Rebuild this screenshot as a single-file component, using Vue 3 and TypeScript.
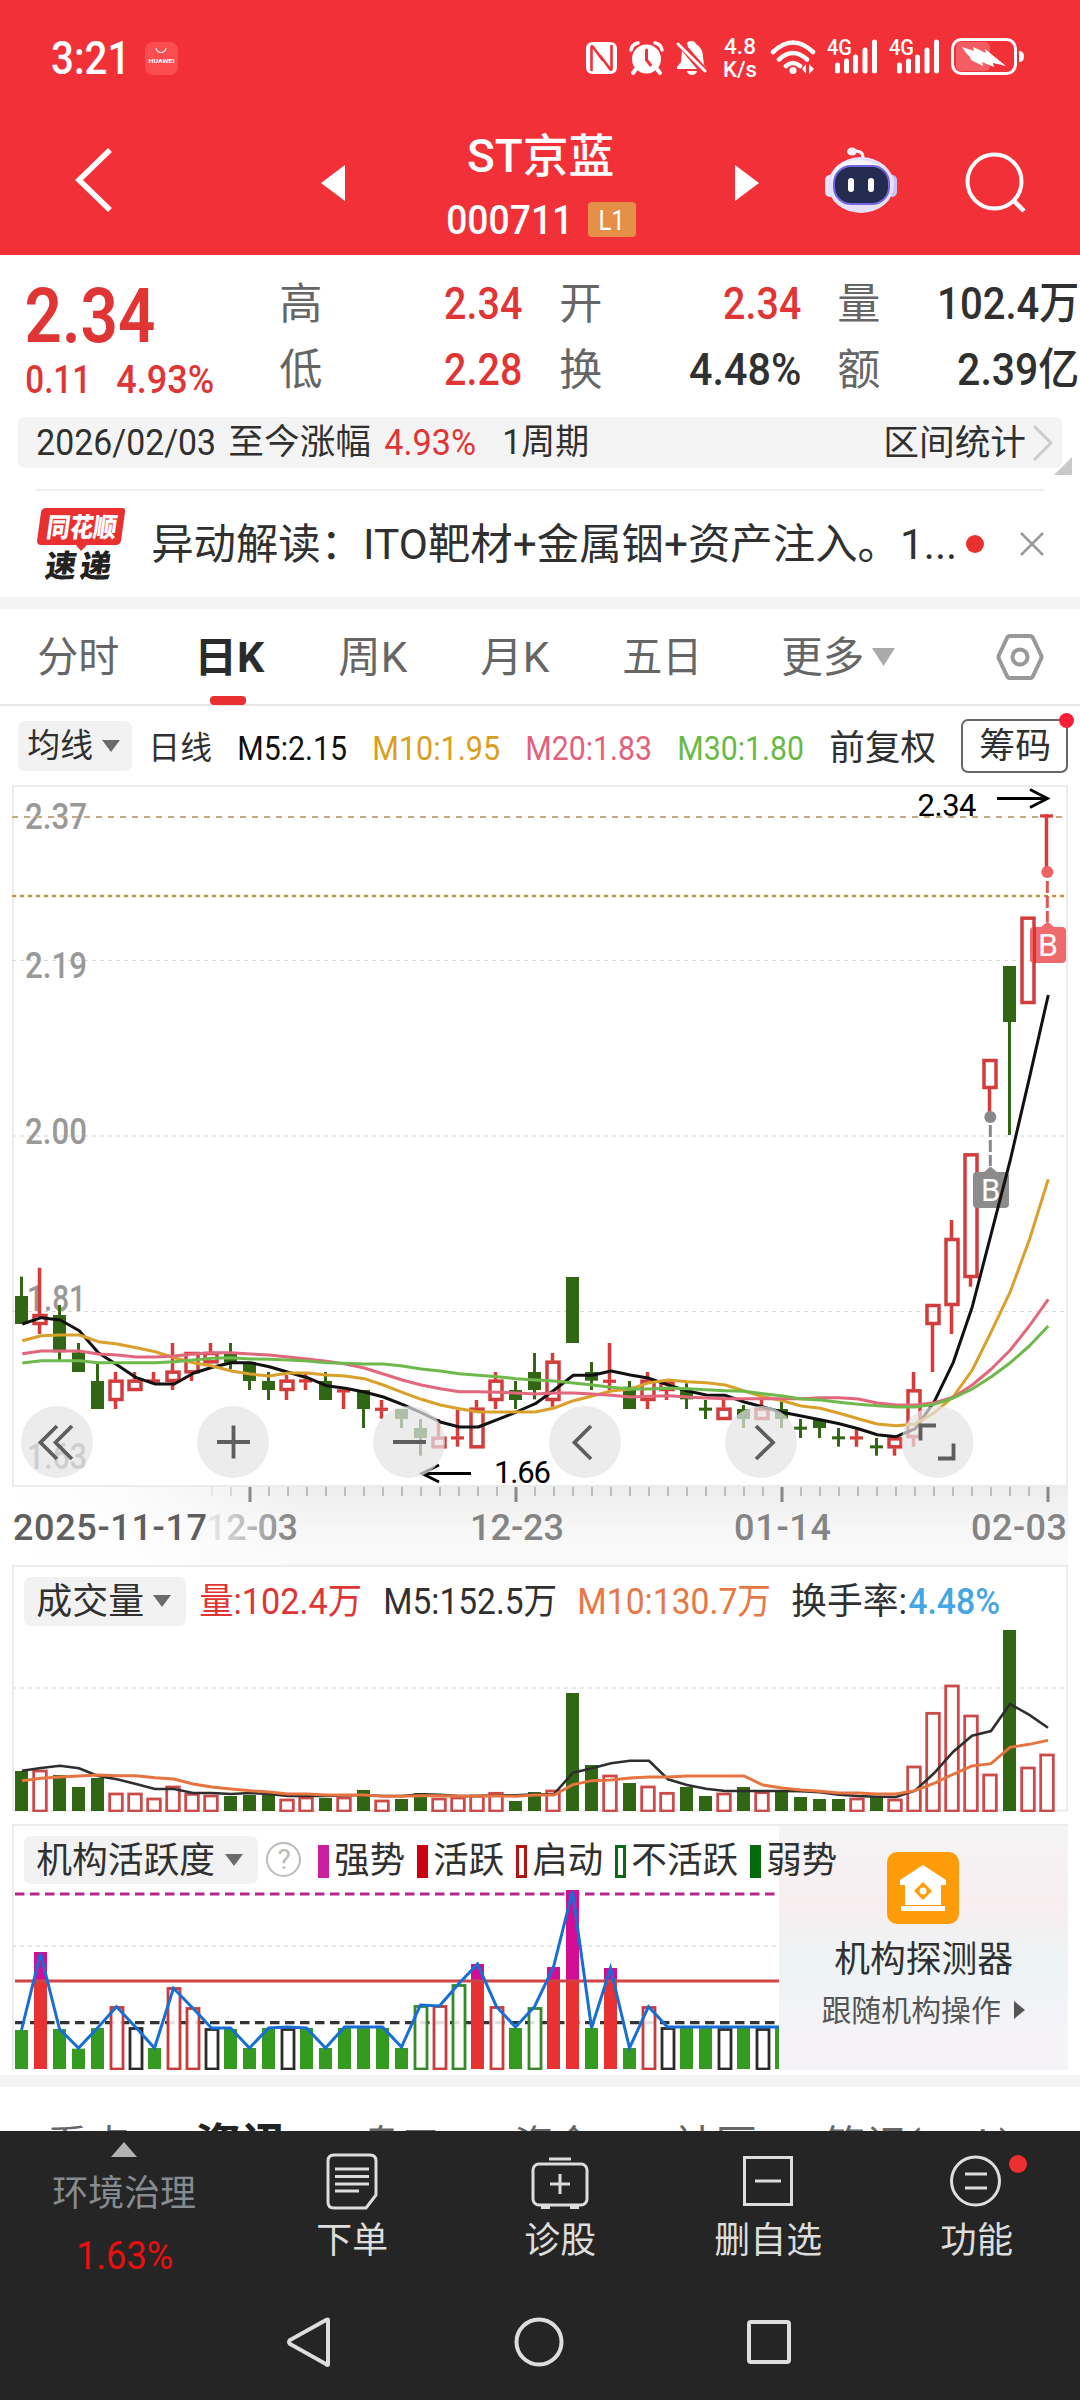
<script setup lang="ts">
import { h, type FunctionalComponent } from 'vue'

interface FitProps { t: string; w: number; s: number; b?: number }

// Single line of text whose glyphs are fitted to the width w at font size s.
const Fit: FunctionalComponent<FitProps> = (p) =>
  h('svg', { width: p.w, height: p.s, style: 'display:block;overflow:visible;flex:none' }, [
    h('text', {
      x: -p.s * 0.02, y: p.s * 0.855, textLength: p.w + p.s * 0.05, lengthAdjust: 'spacingAndGlyphs',
      'font-size': p.s, 'font-weight': p.b ?? 400, fill: 'currentColor',
    }, p.t),
  ])
Fit.props = ['t', 'w', 's', 'b']

const STEP = 19
const cx = (i: number) => 21.5 + STEP * i
const line = (vs: number[], base: number) => vs.map((v, i) => `${cx(i)},${(base + v / 3).toFixed(1)}`).join(' ')

// [up?, high, body top, body bottom, low]
type Candle = [0 | 1, number, number, number, number]
const candles: Candle[] = [
  [0, 350, 408, 492, 492], [1, 323, 462, 495, 522], [0, 435, 465, 577, 600], [0, 549, 577, 636, 636],
  [0, 610, 663, 747, 747], [1, 636, 659, 723, 747], [1, 636, 659, 693, 693], [1, 636, 658, 669, 672],
  [1, 549, 632, 666, 690], [1, 576, 576, 640, 663], [1, 549, 576, 610, 610], [0, 549, 580, 608, 628],
  [0, 606, 606, 663, 690], [0, 636, 663, 690, 720], [1, 645, 659, 693, 720], [1, 640, 658, 667, 690],
  [0, 636, 663, 720, 720], [1, 688, 688, 697, 747], [0, 690, 690, 747, 804], [1, 720, 743, 752, 776],
  [0, 747, 747, 777, 804], [0, 777, 804, 834, 887], [1, 777, 830, 865, 865], [1, 750, 829, 838, 860],
  [1, 720, 743, 865, 865], [1, 636, 659, 723, 747], [0, 663, 690, 720, 747], [0, 579, 636, 690, 718],
  [1, 579, 602, 723, 740], [0, 351, 351, 549, 549], [0, 606, 636, 662, 690], [1, 549, 659, 668, 690],
  [0, 663, 680, 747, 747], [1, 636, 659, 723, 747], [1, 660, 664, 693, 720], [0, 670, 690, 718, 747],
  [0, 720, 743, 752, 777], [1, 720, 743, 780, 780], [0, 735, 747, 777, 804], [1, 720, 743, 780, 780],
  [0, 725, 747, 777, 804], [0, 777, 800, 809, 834], [0, 777, 780, 804, 834], [0, 804, 829, 838, 860],
  [1, 808, 829, 838, 860], [0, 834, 856, 865, 887], [1, 832, 832, 865, 887], [1, 636, 688, 834, 860],
  [1, 432, 432, 495, 636], [1, 180, 234, 438, 522], [1, -20, -20, 354, 380], [1, -303, -303, -213, -130],
  [0, -582, -582, -414, -75], [1, -730, -730, -468, -468], [1, -1037, -1037, -1028, -865],
]
const sticks = candles.map(([up, hi, top, bot, lo], i) => ({
  up: up === 1, x: cx(i), hi: 1160 + hi / 3, top: 1160 + top / 3, bot: 1160 + bot / 3, lo: 1160 + lo / 3,
  flat: bot - top < 12,
}))

const ma5 = [492, 473, 480, 512, 578, 615, 653, 672, 672, 640, 622, 608, 608, 620, 637, 653, 677, 685, 696, 711, 733, 758, 786, 801, 801, 779, 756, 731, 690, 646, 646, 633, 645, 655, 675, 693, 705, 706, 726, 741, 757, 768, 779, 791, 806, 824, 830, 806, 725, 607, 440, 220, 0, -245, -495]
const ma10 = [542, 527, 525, 525, 545, 552, 563, 575, 593, 608, 618, 633, 642, 648, 639, 639, 645, 648, 656, 675, 697, 718, 735, 746, 756, 756, 756, 756, 744, 722, 708, 693, 687, 668, 660, 665, 668, 675, 693, 710, 722, 738, 745, 760, 776, 792, 797, 792, 758, 710, 630, 515, 395, 240, 58]
const ma20 = [581, 573, 573, 573, 582, 585, 591, 591, 588, 582, 578, 578, 582, 585, 591, 597, 604, 612, 624, 642, 660, 675, 686, 695, 695, 697, 699, 702, 699, 699, 702, 706, 711, 709, 707, 711, 714, 716, 716, 716, 716, 716, 713, 713, 717, 729, 735, 735, 728, 712, 675, 627, 570, 498, 418]
const ma30 = [609, 602, 602, 602, 608, 608, 608, 608, 605, 600, 595, 593, 597, 598, 600, 603, 608, 610, 612, 612, 618, 627, 633, 641, 646, 650, 656, 660, 663, 669, 675, 682, 687, 687, 684, 686, 689, 692, 694, 701, 708, 717, 720, 727, 733, 737, 741, 741, 733, 714, 687, 650, 608, 558, 498]
const maLines = [
  { p: line(ma5, 1160), c: '#111' }, { p: line(ma10, 1160), c: '#d9a02b' },
  { p: line(ma20, 1160), c: '#e2667c' }, { p: line(ma30, 1160), c: '#6fb94c' },
]

const volTops = [633, 630, 645, 681, 654, 699, 699, 714, 678, 700, 705, 708, 705, 705, 717, 711, 714, 711, 690, 720, 717, 699, 714, 711, 705, 697, 723, 696, 690, 399, 615, 645, 669, 678, 697, 681, 708, 699, 681, 695, 693, 711, 717, 717, 714, 710, 717, 618, 457, 375, 465, 642, 210, 621, 582]
const volDown = new Set([0, 2, 3, 4, 11, 12, 13, 16, 18, 20, 21, 26, 27, 29, 30, 32, 35, 36, 38, 40, 41, 42, 43, 45, 52])
const vols = volTops.map((v, i) => ({ x: cx(i), y: 1560 + v / 3, up: !volDown.has(i) }))
const vm5 = line([632, 624, 617, 625, 648, 658, 672, 687, 687, 699, 699, 702, 699, 702, 708, 708, 708, 706, 706, 708, 708, 703, 704, 708, 708, 706, 706, 703, 702, 638, 625, 610, 602, 602, 658, 675, 686, 693, 693, 693, 693, 694, 697, 704, 708, 710, 711, 692, 640, 576, 527, 513, 432, 464, 503], 1560)
const vm10 = line([662, 655, 651, 648, 645, 647, 647, 653, 657, 672, 681, 687, 692, 696, 702, 702, 705, 705, 705, 709, 709, 707, 707, 709, 709, 707, 709, 705, 705, 674, 662, 660, 654, 651, 651, 648, 648, 648, 648, 675, 684, 690, 694, 699, 699, 702, 702, 692, 670, 643, 618, 611, 562, 553, 541], 1560)

// G weak, M strong, r starting, k neutral, g inactive
const actKinds = 'GMGGGrkGrrkGGGkGGGGGGgrgMrGgMMGMGrkGGkGkG'.split('')
const actTops = [660, 426, 657, 716, 654, 588, 651, 714, 531, 591, 654, 657, 714, 654, 654, 654, 714, 654, 654, 654, 714, 585, 585, 522, 462, 588, 654, 591, 471, 240, 654, 474, 714, 588, 651, 654, 654, 654, 654, 654, 654]
const acts = actKinds.map((k, i) => ({ k, x: cx(i), y: 1810 + actTops[i] / 3 }))
const outline: Record<string, string> = { r: '#c93c3c', k: '#2c2c2c', g: '#37892a' }
const actLine = line([660, 430, 657, 714, 654, 590, 651, 714, 535, 593, 654, 654, 714, 654, 651, 654, 714, 651, 651, 651, 711, 585, 588, 522, 462, 590, 651, 590, 471, 243, 654, 474, 714, 590, 651, 651, 651, 651, 651, 651, 651], 1810)

const ticks = Array.from({ length: 45 }, (_, k) => k + 10).map((i) => ({
  x: cx(i) + 0.5, major: [12, 26, 40, 54].includes(i), o: i === 10 ? 0.25 : i === 11 ? 0.5 : 1,
}))
const yLabels = [
  { t: '2.37', x: 26, y: 829, w: 60 }, { t: '2.19', x: 26, y: 978, w: 60 }, { t: '2.00', x: 26, y: 1144, w: 60 },
  { t: '1.81', x: 28, y: 1311, w: 57 }, { t: '1.63', x: 28, y: 1469, w: 58 },
]
const dates = [
  { t: '12-23', x: 470, w: 94 }, { t: '01-14', x: 734, w: 97 }, { t: '02-03', x: 971, w: 96 },
]
const circles = [57, 233, 409, 585, 761, 937.5]

const quotes = [
  [{ k: '高', v: '2.34', w: 76, red: true }, { k: '开', v: '2.34', w: 76, red: true }, { k: '量', v: '102.4万', w: 140, red: false }],
  [{ k: '低', v: '2.28', w: 76, red: true }, { k: '换', v: '4.48%', w: 110, red: false }, { k: '额', v: '2.39亿', w: 120, red: false }],
]
</script>

<template>
  <div class="screen">
    <header class="head">
      <div class="status">
        <Fit t="3:21" :w="77" :s="46" :b="500" />
        <svg class="huawei" width="33" height="33" viewBox="0 0 33 33">
          <rect width="33" height="33" rx="8" fill="#fb4c50" />
          <path d="M11 6c1 6 9 6 10 0" fill="none" stroke="#fff" stroke-width="1.2" />
          <text x="3.5" y="21" font-size="6" font-weight="700" fill="#fff" textLength="26" lengthAdjust="spacingAndGlyphs">HUAWEI</text>
        </svg>
        <svg class="sys" width="440" height="44" viewBox="586 36 440 44" fill="#fff">
          <path d="M593 42h17q7 0 7 7v18q0 7-7 7h-17q-7 0-7-7V49q0-7 7-7z" />
          <path d="M593 70V46.500L610 69M610 46v23.500L593.500 47.500" fill="none" stroke="#f13038" stroke-width="0" />
          <path d="M591.500 71V47q0-1.500 1.500 0L603 60.500M611.500 45v24q0 1.500-1.500 0L600 55.500" fill="none" stroke="#f13038" stroke-width="2.600" />
          <circle cx="646.500" cy="59" r="14.500" />
          <path d="M631 50q1-6 7-7M662 50q-1-6-7-7" fill="none" stroke="#fff" stroke-width="3.500" stroke-linecap="round" />
          <path d="M636 69l-3 4M657 69l3 4" stroke="#fff" stroke-width="4" stroke-linecap="round" />
          <path d="M646.500 50v10l4 5" fill="none" stroke="#f13038" stroke-width="3" stroke-linecap="round" />
          <path d="M687 43q1-2 4-2 4 0 5 3 7 4 7 13l1 8 3 4-19-22zM682 51l15 18h-20v-2l4-5zM687 71h10q-1 4-5 4t-5-4z" />
          <path d="M678 44l27 27" stroke="#fff" stroke-width="3" stroke-linecap="round" />
          <text x="724" y="54" font-size="22.500" font-weight="500" textLength="32">4.8</text>
          <text x="723" y="76.500" font-size="22" font-weight="500" textLength="34" lengthAdjust="spacingAndGlyphs">K/s</text>
          <path d="M773 52q20-19 40 0M779 59.500q14-13 28 0M786 66q7-6 14 0" fill="none" stroke="#fff" stroke-width="4.500" stroke-linecap="round" />
          <circle cx="793" cy="70.500" r="3.500" />
          <path d="M806 64v10l-4-5zM809 64v10l5-5z" />
          <g v-for="dx in [0, 62]" :key="dx" :transform="`translate(${dx} 0)`">
            <text x="827" y="55" font-size="22" font-weight="500" textLength="25" lengthAdjust="spacingAndGlyphs">4G</text>
            <path d="M837.500 65v6M846.500 61v10M855.500 57v14M865 50v21M874.500 42v29" stroke="#fff" stroke-width="5" stroke-linecap="round" />
          </g>
          <rect x="952.500" y="39.500" width="63" height="34" rx="9" fill="none" stroke="#fff" stroke-width="3" />
          <rect x="956" y="42" width="34" height="29" rx="5" opacity=".22" />
          <path d="M1019 51q5 0 5 5.500t-5 5.500z" />
          <path d="M962 47l12 4-1-4 13 6-1-4 21 17-13-3 1 4-12-5 1 4-12-6-1-3-4-4z" />
        </svg>
      </div>
      <div class="title">
        <svg class="back" width="40" height="68" viewBox="0 0 40 68"><path d="M36 4L5 34l31 30" fill="none" stroke="#fff" stroke-width="5.500" /></svg>
        <svg class="prev" width="24" height="36"><path d="M0 18L24 0v36z" fill="#fff" /></svg>
        <div class="name">
          <Fit t="ST京蓝" :w="145" :s="46" :b="500" />
          <div class="code"><Fit t="000711" :w="125" :s="41" :b="500" /><span class="lv"><Fit t="L1" :w="25" :s="28" /></span></div>
        </div>
        <svg class="next" width="24" height="36"><path d="M24 18L0 0v36z" fill="#fff" /></svg>
        <svg class="bot" width="74" height="70" viewBox="824 145 74 70">
          <path d="M863 158q0-8-9-7" fill="none" stroke="#fff" stroke-width="3" />
          <ellipse cx="852" cy="151.500" rx="5" ry="4" fill="#f2eefc" />
          <rect x="825" y="175" width="10" height="22" rx="5" fill="#e9e4fb" />
          <rect x="887" y="175" width="10" height="22" rx="5" fill="#c9c2f5" />
          <ellipse cx="861" cy="185" rx="33" ry="28" fill="#e6e1fa" />
          <ellipse cx="858" cy="176" rx="26" ry="16" fill="#f8f5ff" />
          <rect x="834" y="166" width="55" height="38" rx="17" fill="#232c4e" stroke="#7466e0" stroke-width="2" />
          <rect x="848" y="178" width="6" height="14" rx="3" fill="#fff" /><rect x="868" y="178" width="6" height="14" rx="3" fill="#fff" />
        </svg>
        <svg class="search" width="62" height="64" viewBox="964 150 62 64"><circle cx="994.500" cy="181.500" r="27" fill="none" stroke="#fff" stroke-width="4" /><path d="M1013 200l11 11" stroke="#fff" stroke-width="4.500" /></svg>
      </div>
    </header>

    <section class="quote">
      <div class="price red">
        <Fit t="2.34" :w="127" :s="76" :b="600" />
        <div class="chg"><Fit t="0.11" :w="64" :s="39" :b="500" /><Fit t="4.93%" :w="96" :s="39" :b="500" /></div>
      </div>
      <div class="grid">
        <div v-for="(row, r) in quotes" :key="r" class="qrow">
          <div v-for="q in row" :key="q.k" class="cell">
            <Fit class="grey" :t="q.k" :w="41" :s="43" /><Fit :class="{ red: q.red }" :t="q.v" :w="q.w" :s="44" :b="500" />
          </div>
        </div>
      </div>
    </section>

    <section class="range">
      <Fit t="2026/02/03" :w="178" :s="36" />
      <Fit class="r1" t="至今涨幅" :w="141" :s="35" />
      <Fit class="r2 red" t="4.93%" :w="90" :s="36" />
      <Fit class="r3" t="1周期" :w="85" :s="35" />
      <Fit class="r4" t="区间统计" :w="141" :s="35" />
      <svg class="r5" width="20" height="36"><path d="M1 1l17 17L1 35" fill="none" stroke="#ccc" stroke-width="3" /></svg>
      <svg class="corner" width="18" height="18"><path d="M18 0v18H0z" fill="#c9c9c9" /></svg>
    </section>

    <section class="news">
      <svg class="logo" width="90" height="74" viewBox="36 506 90 74">
        <path d="M46 507h76q4 0 3 4l-4 29q-1 4-5 4H87l-6 6-5-6H41q-4 0-4-4l4-29q1-4 5-4z" fill="#e93030" />
        <text x="46" y="536.500" font-size="27" font-weight="900" fill="#fff" textLength="70" lengthAdjust="spacingAndGlyphs" transform="skewX(-8) translate(75 0)">同花顺</text>
        <text x="45" y="576" font-size="31" font-weight="900" fill="#222" textLength="66" transform="skewX(-8) translate(80 0)">速递</text>
      </svg>
      <Fit class="n1" t="异动解读：ITO靶材+金属铟+资产注入。1..." :w="804" :s="42" />
      <i class="ndot"></i>
      <svg class="nx" width="24" height="24"><path d="M1 1l22 22M23 1L1 23" stroke="#999" stroke-width="2.500" /></svg>
    </section>
    <div class="band"></div>

    <nav class="tabs">
      <Fit t="分时" :w="80" :s="42" />
      <div class="active"><Fit t="日K" :w="68" :s="42" :b="700" /><i></i></div>
      <Fit class="t2" t="周K" :w="67" :s="42" />
      <Fit class="t3" t="月K" :w="67" :s="42" />
      <Fit class="t3" t="五日" :w="78" :s="42" />
      <Fit class="t5" t="更多" :w="81" :s="42" />
      <svg class="t6" width="23" height="18"><path d="M0 0h23L11.500 18z" fill="#aaa" /></svg>
      <svg class="t7" width="48" height="46" viewBox="0 0 48 46"><path d="M14 2h20q2 0 3 2l8 17q1 2 0 4l-8 17q-1 2-3 2H14q-2 0-3-2L3 25q-1-2 0-4l8-17q1-2 3-2z" fill="none" stroke="#999" stroke-width="4" /><circle cx="24" cy="23" r="7.500" fill="none" stroke="#999" stroke-width="4" /></svg>
    </nav>

    <section class="ma">
      <span class="chip c1"><Fit t="均线" :w="64" :s="33" /><svg width="18" height="12"><path d="M0 0h18L9 12z" fill="#6b6b6b" /></svg></span>
      <Fit class="m1" t="日线" :w="62" :s="32" />
      <Fit class="m2 black" t="M5:2.15" :w="108" :s="34" />
      <Fit class="m3 yellow" t="M10:1.95" :w="126" :s="34" />
      <Fit class="m4 pink" t="M20:1.83" :w="125" :s="34" />
      <Fit class="m4 green" t="M30:1.80" :w="125" :s="34" />
      <Fit class="m5" t="前复权" :w="105" :s="35" />
      <span class="chipbtn"><Fit t="筹码" :w="70" :s="35" /><i></i></span>
    </section>

    <svg class="kline" width="1080" height="780" viewBox="0 785 1080 780">
      <defs>
        <linearGradient id="axis" x1="0" y1="0" x2="0" y2="1"><stop offset="0" stop-color="#ededed" /><stop offset=".6" stop-color="#f8f8f8" /><stop offset="1" stop-color="#fafafa" /></linearGradient>
        <linearGradient id="fade" x1="0" y1="0" x2="1" y2="0"><stop offset="0" stop-color="#fff" /><stop offset=".35" stop-color="#fff" stop-opacity=".85" /><stop offset="1" stop-color="#fff" stop-opacity="0" /></linearGradient>
        <linearGradient id="datefade" x1="0" y1="0" x2="1" y2="0"><stop offset="0" stop-color="#888" stop-opacity=".1" /><stop offset=".9" stop-color="#888" /></linearGradient>
      </defs>
      <rect x="12" y="1486" width="1056" height="79" fill="url(#axis)" />
      <rect x="12" y="1487" width="300" height="78" fill="url(#fade)" />
      <rect x="13" y="786" width="1054" height="700" fill="#fff" stroke="#ececec" stroke-width="2" />
      <g fill="none">
        <path d="M12 960.500H1066M12 1311.500H1066" stroke="#d8d8d8" stroke-dasharray="4 4" />
        <path d="M12 1136H1066" stroke="#e9e9e9" stroke-width="2" stroke-dasharray="4 4" />
      </g>
      <g fill="#999" font-size="36" font-weight="500">
        <text v-for="l in yLabels" :key="l.t" :x="l.x - 1" :y="l.y" :textLength="l.w + 2" lengthAdjust="spacingAndGlyphs">{{ l.t }}</text>
      </g>
      <path d="M12 817H1066" stroke="#c4aa80" stroke-width="2" stroke-dasharray="6 6" />
      <path d="M12 896H1066" stroke="#fbe3bb" stroke-width="3.500" stroke-dasharray="4.500 3.500" />
      <path d="M12 896H1066" stroke="#bd8f50" stroke-width="2" stroke-dasharray="4 4" />
      <g v-for="s in sticks" :key="s.x">
        <template v-if="s.up">
          <path :d="`M${s.x - 1} ${s.hi}V${s.top}M${s.x - 1} ${s.bot}V${s.lo}`" stroke="#d83a3a" stroke-width="3.500" />
          <rect v-if="s.flat" :x="s.x - 7.500" :y="s.top" width="13" height="3.200" fill="#d83a3a" />
          <path v-if="s.flat" :d="`M${s.x - 1} ${s.top}V${s.bot}`" stroke="#d83a3a" stroke-width="3.500" />
          <rect v-else :x="s.x - 6.500" :y="s.top + 1.500" width="12" :height="s.bot - s.top - 3" fill="none" stroke="#d23c3c" stroke-width="3.500" />
        </template>
        <template v-else>
          <path :d="`M${s.x} ${s.hi}V${s.lo}`" stroke="#306614" stroke-width="3" />
          <rect :x="s.x - 6.500" :y="s.top" width="13" :height="s.bot - s.top" fill="#306614" />
        </template>
      </g>
      <circle cx="990.300" cy="1117" r="6" fill="#888" />
      <path d="M990.300 1125V1166" stroke="#888" stroke-width="3" stroke-dasharray="12 3" />
      <path d="M976 1172h8l6.500-5.500 6.500 5.500h8q4 0 4 4v28q0 4-4 4h-28.500q-3.500 0-3.500-4v-28q0-4 3.500-4z" fill="#8c8c8c" />
      <text x="981" y="1201" font-size="31" fill="#fff">B</text>
      <circle cx="1047.300" cy="872" r="6" fill="#ee6165" />
      <path d="M1047.300 881V922" stroke="#e15454" stroke-width="3" stroke-dasharray="12 3" />
      <path d="M1033 927h8l6.500-5.500 6.500 5.500h8q4 0 4 4v28q0 4-4 4h-28.500q-3.500 0-3.500-4v-28q0-4 3.500-4z" fill="#ee5f62" fill-opacity=".93" />
      <path d="M1034.500 927V963" stroke="#dc2f34" stroke-width="3" />
      <text x="1038" y="956" font-size="32" fill="#fff">B</text>
      <polyline v-for="m in maLines" :key="m.c" :points="m.p" transform="translate(.8 0)" fill="none" :stroke="m.c" stroke-width="3" stroke-linejoin="round" />
      <g fill="#000" font-size="31">
        <text x="917.500" y="815.500" textLength="59">2.34</text>
        <text x="494" y="1483" textLength="57">1.66</text>
      </g>
      <path d="M997 798.500h50M1030 789.500l17.500 9-17.500 9M471 1473.500h-49M439 1465l-17 8.500 17 8.500" fill="none" stroke="#000" stroke-width="2.800" />
      <circle v-for="c in circles" :key="c" :cx="c" cy="1442" r="36" fill="#e4e4e4" fill-opacity=".71" />
      <g fill="none" stroke="#5e5e5e" stroke-width="3.800">
        <path d="M57 1426l-16.500 16.500L57 1459M72 1426l-16.500 16.500L72 1459" />
        <path d="M217 1442h33M233.500 1425.500v33M393 1442h33" />
        <path d="M591 1426l-16.500 16.500L591 1459M756 1426l17 16.500-17 16.500" />
        <path d="M920.500 1440.500V1425.500H936M953.500 1443.500V1458.500H938" />
      </g>
      <path v-for="t in ticks" :key="t.x" :d="`M${t.x} 1487v${t.major ? 15 : 9}`" :stroke="t.major ? '#888' : '#bdbdbd'" :stroke-width="t.major ? 3 : 2" :opacity="t.o" />
      <g font-size="36" font-weight="500" fill="#858585">
        <text x="13" y="1540" textLength="194" fill="#5f5f5f">2025-11-17</text>
        <text x="206" y="1540" textLength="92" fill="url(#datefade)">12-03</text>
        <text v-for="d in dates" :key="d.t" :x="d.x" y="1540" :textLength="d.w">{{ d.t }}</text>
      </g>
    </svg>

    <section class="panel vol">
      <div class="phead">
        <span class="chip c2"><Fit t="成交量" :w="106" :s="36" /><svg width="18" height="12"><path d="M0 0h18L9 12z" fill="#6b6b6b" /></svg></span>
        <Fit class="v1 red" t="量:102.4万" :w="161" :s="36" />
        <Fit class="v2" t="M5:152.5万" :w="172" :s="36" />
        <Fit class="v3 orange" t="M10:130.7万" :w="192" :s="36" />
        <Fit class="v3" t="换手率:" :w="114" :s="36" />
        <Fit class="v4 blue" t="4.48%" :w="90" :s="36" :b="500" />
      </div>
      <svg class="plot" width="1054" height="185" viewBox="14 1627 1054 185">
        <path d="M12 1688H1066" stroke="#e8e8e8" stroke-width="2" stroke-dasharray="4 4" />
        <path d="M12 1810.500H1068" stroke="#ebebeb" stroke-width="2" />
        <template v-for="v in vols" :key="v.x">
          <rect v-if="v.up" :x="v.x - 6.800" :y="v.y + 1" width="12.600" :height="1810 - v.y" fill="#fff" stroke="#cc4a4a" stroke-width="2.800" />
          <rect v-else :x="v.x - 6.500" :y="v.y" width="13" :height="1811 - v.y" fill="#306614" />
        </template>
        <polyline :points="vm5" fill="none" stroke="#2e2e2e" stroke-width="2.600" transform="translate(.5 0)" />
        <polyline :points="vm10" fill="none" stroke="#e67440" stroke-width="2.900" transform="translate(.5 0)" />
      </svg>
    </section>

    <section class="panel act">
      <div class="aleft">
        <div class="phead">
          <span class="chip c3"><Fit t="机构活跃度" :w="177" :s="36" /><svg width="18" height="12"><path d="M0 0h18L9 12z" fill="#6b6b6b" /></svg></span>
          <span class="q"><Fit t="?" :w="12" :s="27" /></span>
          <i class="sw s1"></i><Fit class="lg" t="强势" :w="69" :s="36" />
          <i class="sw s2"></i><Fit class="lg" t="活跃" :w="69" :s="36" />
          <i class="sw s3"></i><Fit class="lg" t="启动" :w="69" :s="36" />
          <i class="sw s4"></i><Fit class="lg" t="不活跃" :w="105" :s="36" />
          <i class="sw s5"></i><Fit class="lg" t="弱势" :w="69" :s="36" />
        </div>
        <svg class="plot" width="765" height="184" viewBox="14 1886 765 184">
          <path d="M12 1946H779" stroke="#e8e8e8" stroke-width="2" stroke-dasharray="4 4" />
          <path d="M15 1894H776" stroke="#b8258d" stroke-width="3" stroke-dasharray="9.500 5.500" />
          <path d="M15 2022.700H776" stroke="#333" stroke-width="3.200" stroke-dasharray="9.500 5.500" />
          <template v-for="a in acts" :key="a.x">
            <rect v-if="a.k === 'G'" :x="a.x - 6.500" :y="a.y" width="13" :height="2069 - a.y" fill="#359a20" />
            <template v-else-if="a.k === 'M'">
              <rect :x="a.x - 6.500" y="1981" width="13" height="88" fill="#e83232" />
              <rect :x="a.x - 6.500" :y="a.y" width="13" :height="1981 - a.y" fill="#d30d94" />
            </template>
            <rect v-else :x="a.x - 5.500" :y="a.y + 1.500" width="12" :height="2067.500 - a.y" fill="#fff" fill-opacity=".85" :stroke="outline[a.k]" stroke-width="2.800" />
          </template>
          <path d="M15 1981H779" stroke="#d04444" stroke-width="3.200" />
          <polyline :points="actLine + ' 781,2027'" fill="none" stroke="#176fd6" stroke-width="3" />
        </svg>
      </div>
      <div class="promo">
        <svg width="72" height="72" viewBox="0 0 72 72">
          <rect width="72" height="72" rx="10" fill="#ff9c0a" />
          <path d="M36 13L59 28v5H13v-5zM18 33h36v20H18zM14 54h44v5H14z" fill="#fff" />
          <path d="M36 30l9 9-9 9-9-9z" fill="#ff9c0a" /><circle cx="36" cy="39" r="3.500" fill="#fff" />
        </svg>
        <Fit class="p1" t="机构探测器" :w="177" :s="36" />
        <div class="p2"><Fit t="跟随机构操作" :w="178" :s="30" /><svg width="11" height="18"><path d="M0 0l11 9-11 9z" fill="#555" /></svg></div>
      </div>
    </section>
    <div class="gap"></div>
    <div class="band"></div>

    <nav class="sub">
      <Fit t="看点" :w="82" :s="41" />
      <Fit class="u1 dark" t="资讯" :w="90" :s="46" :b="700" />
      <Fit class="u2" t="盘口" :w="77" :s="41" />
      <Fit class="u2" t="资金" :w="77" :s="41" />
      <Fit class="u3" t="社区" :w="82" :s="41" />
      <Fit class="u4" t="笔记(1.6k)" :w="187" :s="41" />
    </nav>

    <footer class="foot">
      <div class="tools">
        <div class="sector">
          <svg width="26" height="15"><path d="M13 0l13 15H0z" fill="#b3b3b3" /></svg>
          <Fit class="f1" t="环境治理" :w="142" :s="36" />
          <Fit class="f2" t="1.63%" :w="95" :s="38" />
        </div>
        <div class="tool">
          <svg width="60" height="60" viewBox="0 0 60 60" fill="none" stroke="#ddd" stroke-width="3"><path d="M12 4h36q6 0 6 6v34l-10 13H12q-6 0-6-6V10q0-6 6-6z" /><path d="M13 18h34M13 25.500h34M13 33h34M13 40h24" /></svg>
          <Fit t="下单" :w="70" :s="36" />
        </div>
        <div class="tool">
          <svg width="60" height="60" viewBox="0 0 60 60" fill="none" stroke="#ddd" stroke-width="3"><rect x="3" y="13" width="54" height="41" rx="6" /><path d="M19 8h22M30 23v20M20 33h20M11 56.500h9M40 56.500h9" /></svg>
          <Fit t="诊股" :w="70" :s="36" />
        </div>
        <div class="tool">
          <svg width="60" height="60" viewBox="0 0 60 60" fill="none" stroke="#ddd" stroke-width="3"><rect x="6.500" y="6.500" width="47" height="47" /><path d="M17 30h26" /></svg>
          <Fit t="删自选" :w="106" :s="36" />
        </div>
        <div class="tool">
          <svg width="60" height="60" viewBox="0 0 60 60" fill="none" stroke="#ddd" stroke-width="3"><circle cx="29.500" cy="30" r="24" /><path d="M19 23h22M19 37h22" /></svg>
          <Fit t="功能" :w="71" :s="36" />
          <i class="fdot"></i>
        </div>
      </div>
      <div class="nav">
        <svg width="46" height="52" viewBox="0 0 46 52"><path d="M42 4v44q0 2-2 0L4 28q-2-2 0-4L40 4q2-1 2 0z" fill="none" stroke="#ddd" stroke-width="4" /></svg>
        <svg width="50" height="50"><circle cx="25" cy="25" r="22.500" fill="none" stroke="#ddd" stroke-width="4" /></svg>
        <svg width="46" height="46"><rect x="3" y="3" width="40" height="40" rx="2" fill="none" stroke="#ddd" stroke-width="4" /></svg>
      </div>
    </footer>
  </div>
</template>

<style>
body { margin: 0; }
</style>

<style scoped>
.screen { width: 1080px; height: 2400px; overflow: hidden; background: #fff; color: #303030; font-family: Roboto, "Noto Sans CJK SC", sans-serif; display: flex; flex-direction: column; }
.screen > * { flex: none; box-sizing: border-box; }
svg { display: block; flex: none; }
.red { color: #e03535; }
.grey { color: #666; }
.black { color: #111; }
.yellow { color: #dd9d1e; }
.pink { color: #e4607a; }
.green { color: #69ba45; }
.orange { color: #e97743; }
.blue { color: #46a6e2; }
.dark { color: #222; }

.head { height: 255px; background: #f13038; color: #fff; }
.status { height: 116px; display: flex; align-items: center; padding-left: 52px; }
.huawei { margin-left: 16px; }
.sys { margin-left: 408px; }
.title { display: flex; align-items: flex-start; height: 139px; }
.back { margin: 30px 0 0 74px; }
.prev { margin: 49px 0 0 207px; }
.name { width: 390px; display: flex; flex-direction: column; align-items: center; padding-top: 17px; }
.code { display: flex; align-items: center; gap: 16px; margin: 20px 0 0 2px; }
.lv { width: 48px; height: 35px; border-radius: 4px; background: #e58f48; display: flex; align-items: center; justify-content: center; }
.next { margin-top: 49px; }
.bot { margin: 29px 0 0 65px; }
.search { margin: 34px 0 0 66px; }

.quote { height: 162px; display: flex; padding-left: 26px; }
.price { width: 254px; padding-top: 22px; }
.chg { display: flex; gap: 27px; margin-top: 7px; }
.grid { padding-top: 15px; }
.qrow { display: grid; grid-template-columns: 241px 240px 240px; column-gap: 38.500px; height: 66px; }
.cell { display: flex; align-items: center; justify-content: space-between; }

.range { position: relative; height: 51px; margin: 0 18px; border-radius: 6px; background: #f4f4f4; display: flex; align-items: center; padding-left: 19px; }
.range > :not(.r4):not(.r5):not(.corner) { margin-top: -2px; }
.r1 { margin-left: 14px; }
.r2 { margin-left: 15px; }
.r3 { margin-left: 28px; }
.r4 { margin-left: 296px; }
.r5 { margin-left: 8px; }
.corner { position: absolute; right: -10px; bottom: -7px; }

.news { height: 108px; margin: 21px 36px 0; border-top: 2px solid #efefef; display: flex; align-items: center; }
.n1 { margin-left: 26px; }
.ndot { width: 18px; height: 18px; border-radius: 50%; background: #e93030; margin-left: 10px; }
.nx { margin-left: 36px; }
.band { height: 12px; background: #f4f4f4; }

.tabs { height: 97px; border-bottom: 2px solid #e8e8e8; display: flex; align-items: center; padding-left: 38px; color: #666; }
.active { position: relative; margin-left: 77px; color: #2b2b2b; }
.active i { position: absolute; left: 15px; top: 60px; width: 36px; height: 9px; border-radius: 4px; background: #e93030; }
.t2 { margin-left: 76px; }
.t3 { margin-left: 75px; }
.t5 { margin-left: 81px; }
.t6 { margin-left: 9px; }
.t7 { margin-left: 101px; }

.ma { height: 79px; display: flex; align-items: center; padding: 0 12px 0 18px; }
.chip { background: #f2f2f2; border-radius: 7px; display: flex; align-items: center; box-sizing: border-box; flex: none; }
.c1 { width: 114px; height: 50px; padding-left: 10px; gap: 10px; }
.ma > .m1, .ma > .m2, .ma > .m3, .ma > .m4, .ma > .m5 { margin-top: 4px; }
.m1 { margin-left: 17px; }
.m2 { margin-left: 27px; }
.m3 { margin-left: 27px; }
.m4 { margin-left: 27px; }
.m5 { margin-left: 27px; }
.chipbtn { position: relative; margin-left: auto; width: 107px; height: 54px; box-sizing: border-box; border: 2px solid #666; border-radius: 7px; display: flex; align-items: center; justify-content: center; }
.chipbtn i { position: absolute; right: -8px; top: -8px; width: 15px; height: 15px; border-radius: 50%; background: #fb1f36; }

.panel { margin-left: 12px; width: 1056px; border-top: 2px solid #ececec; border-left: 2px solid #ececec; }
.phead { height: 60px; display: flex; align-items: center; padding: 0 0 0 10px; box-sizing: border-box; margin-bottom: 0; }
.vol { height: 246px; border-right: 2px solid #ececec; margin-bottom: 13px; }
.plot { overflow: hidden; }
.c2 { width: 162px; height: 49px; padding-left: 13px; gap: 10px; margin-top: 8px; }
.vol .phead > :not(.chip) { margin-top: 8px; }
.v1 { margin-left: 14px; }
.v2 { margin-left: 23px; }
.v3 { margin-left: 22px; }
.v4 { margin-left: 3px; }

.act { height: 246px; display: flex; }
.aleft { width: 765px; flex: none; position: relative; z-index: 1; }
.aleft .phead { padding-top: 7px; }
.c3 { width: 234px; height: 48px; padding-left: 13px; gap: 11px; }
.q { width: 35px; height: 35px; border: 2px solid #bbb; box-sizing: border-box; border-radius: 50%; margin-left: 8px; color: #bbb; display: flex; align-items: center; justify-content: center; flex: none; }
.sw { width: 11px; height: 33px; box-sizing: border-box; flex: none; margin-left: 13px; margin-top: 3px; }
.q + .sw { margin-left: 17px; }
.s1 { background: #c91fa0; }
.s2 { background: #cb0010; }
.s3 { border: 3px solid #b01515; }
.s4 { border: 3px solid #0d6a14; }
.s5 { background: #046a0c; }
.lg { margin-left: 6px; }
.promo { width: 289px; display: flex; flex-direction: column; align-items: center; padding-top: 26px; box-sizing: border-box; background: linear-gradient(180deg, #f4f4f5 0%, #f8eef0 32%, #edf3f4 55%, #f5f3f7 85%); }
.promo > svg:first-child { margin-right: 2px; }
.p1 { margin-top: 17px; }
.p2 { display: flex; align-items: center; gap: 14px; margin-top: 18px; color: #555; }
.gap { height: 5px; }

.sub { height: 44px; overflow: hidden; display: flex; align-items: flex-start; padding: 38px 0 0 47px; color: #666; }
.u1 { margin-left: 67px; margin-top: -3px; }
.u2 { margin-left: 76px; }
.u3 { margin-left: 82px; }
.u4 { margin-left: 69px; }

.foot { height: 269px; background: #252525; color: #ddd; }
.tools { display: grid; grid-template-columns: 248px 208px 208px 208px 208px; height: 150px; }
.sector { display: flex; flex-direction: column; align-items: center; padding-top: 11px; box-sizing: border-box; color: #858b91; }
.f1 { margin-top: 18px; }
.f2 { margin-top: 25px; color: #e81010; }
.tool { position: relative; display: flex; flex-direction: column; align-items: center; gap: 11px; padding-top: 20px; box-sizing: border-box; }
.fdot { position: absolute; left: 137px; top: 24px; width: 18px; height: 18px; border-radius: 50%; background: #ec3030; }
.nav { display: flex; align-items: center; justify-content: space-between; margin: 35px 288px 0 286px; height: 52px; }
</style>
